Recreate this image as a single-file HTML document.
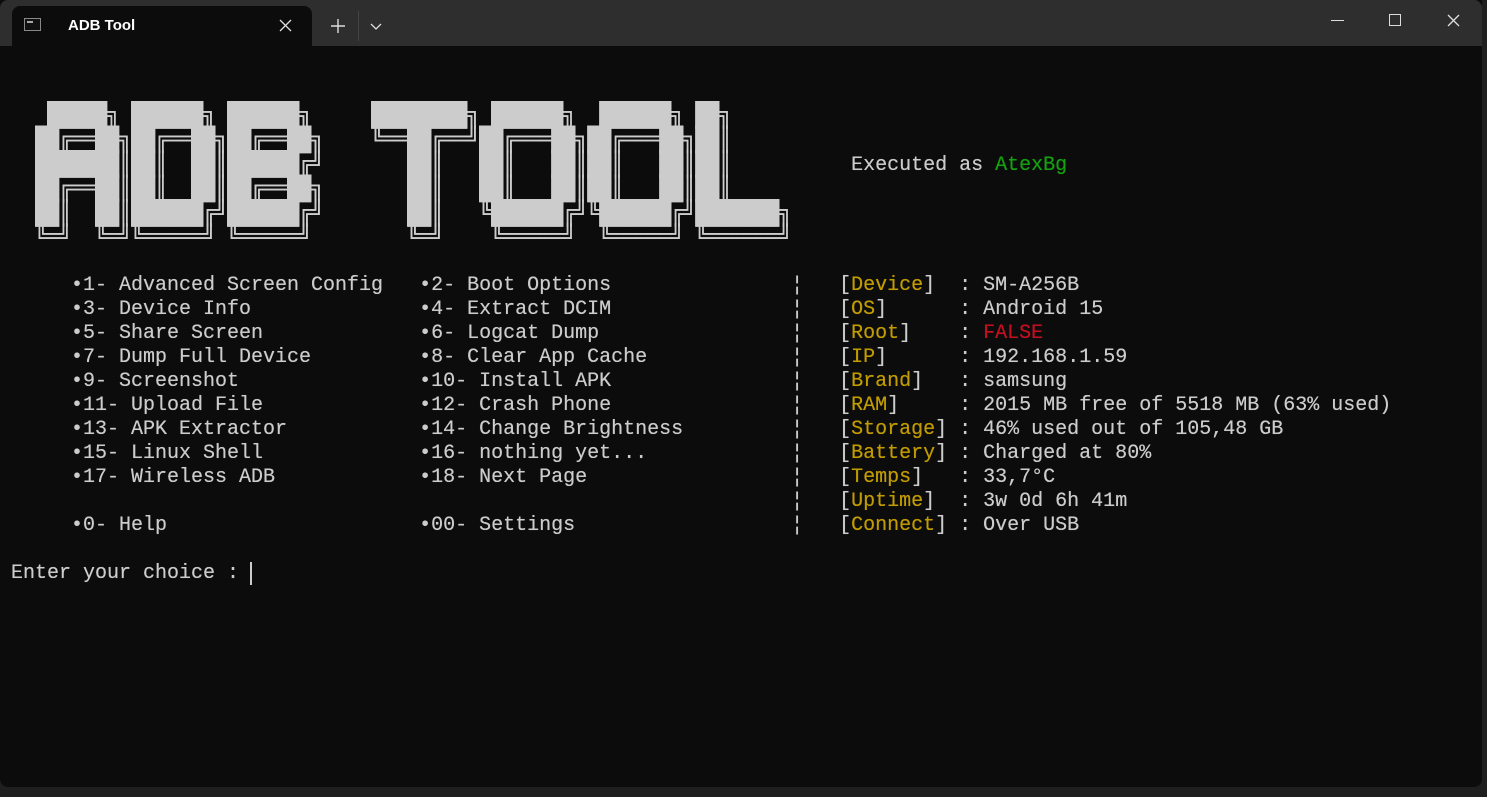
<!DOCTYPE html>
<html><head><meta charset="utf-8"><style>
html,body{margin:0;padding:0;width:1487px;height:797px;overflow:hidden;background:#1f1f1f;}
.win{position:absolute;left:0;top:0;width:1482px;height:787px;background:#0c0c0c;border-radius:0 0 8px 8px;overflow:hidden;}
.bar{position:absolute;left:0;top:0;width:1482px;height:46px;background:#2e2e2e;border-radius:8px 8px 0 0;}
.tab{position:absolute;left:12px;top:6px;width:300px;height:40px;background:#0c0c0c;border-radius:8px 8px 0 0;}
.tt{position:absolute;left:56px;top:11px;color:#fff;font:bold 15px "Liberation Sans",sans-serif;}
.ico{position:absolute;left:12px;top:12px;width:17px;height:13px;border:1px solid #888;background:#111;box-sizing:border-box;}
.ico:after{content:"";position:absolute;left:2px;top:2px;width:6px;height:2px;background:#aaa;}
pre{margin:0;position:absolute;font-family:"Liberation Mono","DejaVu Sans Mono",monospace;color:#cccccc;}
.txt{font-size:20px;line-height:24px;left:11px;text-shadow:0 0 0.4px #ccc;}
.art{font-size:24px;line-height:24px;left:11px;top:104px;transform:scaleX(.8333) scaleY(1.02);transform-origin:0 0;text-shadow:0.5px 0 0 #ccc;}
.y{color:#c19c00;text-shadow:0 0 0.4px #c19c00}.g{color:#13a10e;text-shadow:0 0 0.4px #13a10e}.r{color:#c50f1f;text-shadow:0 0 0.4px #c50f1f}
</style></head><body>
<div class="win">
<div class="bar">
 <div class="tab"><div class="ico"></div><div class="tt">ADB Tool</div>
  <svg style="position:absolute;left:267px;top:13px" width="13" height="13"><path d="M1 1L12 12M12 1L1 12" stroke="#ddd" stroke-width="1.3"/></svg></div>
 <svg style="position:absolute;left:331px;top:19px" width="14" height="14"><path d="M7 0V14M0 7H14" stroke="#ddd" stroke-width="1.4"/></svg>
 <div style="position:absolute;left:358px;top:11px;width:1px;height:30px;background:#444"></div>
 <svg style="position:absolute;left:370px;top:23px" width="12" height="7"><path d="M1 1L6 6L11 1" stroke="#ddd" stroke-width="1.3" fill="none"/></svg>
 <div style="position:absolute;left:1331px;top:20px;width:13px;height:1px;background:#ddd"></div>
 <div style="position:absolute;left:1389px;top:14px;width:10px;height:10px;border:1px solid #ddd"></div>
 <svg style="position:absolute;left:1447px;top:14px" width="13" height="13"><path d="M1 1L12 12M12 1L1 12" stroke="#ddd" stroke-width="1.3"/></svg>
</div>
<pre class="art">   █████╗ ██████╗ ██████╗     ████████╗ ██████╗  ██████╗ ██╗
  ██╔══██╗██╔══██╗██╔══██╗    ╚══██╔══╝██╔═══██╗██╔═══██╗██║
  ███████║██║  ██║██████╔╝       ██║   ██║   ██║██║   ██║██║
  ██╔══██║██║  ██║██╔══██╗       ██║   ██║   ██║██║   ██║██║
  ██║  ██║██████╔╝██████╔╝       ██║   ╚██████╔╝╚██████╔╝███████╗
  ╚═╝  ╚═╝╚═════╝ ╚═════╝        ╚═╝    ╚═════╝  ╚═════╝ ╚══════╝</pre>
<pre class="txt" style="top:154px">                                                                      Executed as <span class="g">AtexBg</span></pre>
<pre class="txt" style="top:274px">     •1- Advanced Screen Config   •2- Boot Options               ¦   [<span class="y">Device</span>]  : SM-A256B
     •3- Device Info              •4- Extract DCIM               ¦   [<span class="y">OS</span>]      : Android 15
     •5- Share Screen             •6- Logcat Dump                ¦   [<span class="y">Root</span>]    : <span class="r">FALSE</span>
     •7- Dump Full Device         •8- Clear App Cache            ¦   [<span class="y">IP</span>]      : 192.168.1.59
     •9- Screenshot               •10- Install APK               ¦   [<span class="y">Brand</span>]   : samsung
     •11- Upload File             •12- Crash Phone               ¦   [<span class="y">RAM</span>]     : 2015 MB free of 5518 MB (63% used)
     •13- APK Extractor           •14- Change Brightness         ¦   [<span class="y">Storage</span>] : 46% used out of 105,48 GB
     •15- Linux Shell             •16- nothing yet...            ¦   [<span class="y">Battery</span>] : Charged at 80%
     •17- Wireless ADB            •18- Next Page                 ¦   [<span class="y">Temps</span>]   : 33,7°C
                                                                 ¦   [<span class="y">Uptime</span>]  : 3w 0d 6h 41m
     •0- Help                     •00- Settings                  ¦   [<span class="y">Connect</span>] : Over USB

Enter your choice : </pre>
<div style="position:absolute;left:250px;top:562px;width:2px;height:23px;background:#ccc"></div>
</div>
</body></html>
